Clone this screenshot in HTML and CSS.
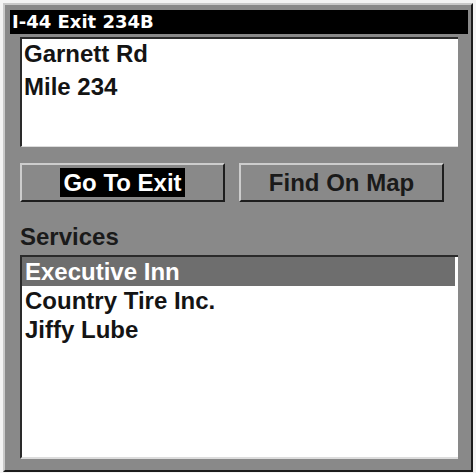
FILE: index.html
```html
<!DOCTYPE html>
<html lang="en">
<head>
    <meta charset="UTF-8">
    <meta name="viewport" content="width=device-width, initial-scale=1.0">
    <title>Exit Details</title>
    <link rel="stylesheet" href="styles.css">
</head>
<body>
    <div class="frame">
        <div class="title-bar">I-44 Exit 234B</div>

        <div class="panel">
            <!-- Exit info -->
            <div class="info-box">
                <div class="info-line">Garnett Rd</div>
                <div class="info-line">Mile 234</div>
            </div>

            <!-- Actions -->
            <div class="actions">
                <button class="btn"><span class="btn-label selected">Go To Exit</span></button>
                <button class="btn"><span class="btn-label">Find On Map</span></button>
            </div>

            <!-- Services list -->
            <div class="section-title">Services</div>
            <ul class="service-list">
                <li class="service selected">Executive Inn</li>
                <li class="service">Country Tire Inc.</li>
                <li class="service">Jiffy Lube</li>
            </ul>
        </div>
    </div>
</body>
</html>
```

FILE: styles.css
```css
body {
    margin: 0;
    padding: 0;
    background-color: #f4f4f4;
    font-family: 'Liberation Sans', Arial, sans-serif;
    font-weight: bold;
}

.frame {
    box-sizing: border-box;
    width: 470px;
    height: 469px;
    margin: 3px 3px 0 3px;
    padding: 5px 3px 0 5px;
    background-color: #898989;
    border-top: 2px solid #c9c9c9;
    border-left: 2px solid #c9c9c9;
    border-right: 2px solid #1c1c1c;
    border-bottom: 2px solid #1c1c1c;
}

.title-bar {
    height: 24px;
    line-height: 24px;
    padding-left: 2px;
    background-color: #000;
    color: #fff;
    font-family: 'DejaVu Sans', sans-serif;
    font-size: 18px;
}

.panel {
    padding: 0 10px;
}

.info-box {
    box-sizing: border-box;
    height: 110px;
    margin-top: 3px;
    padding-left: 2px;
    display: flex;
    flex-direction: column;
    gap: 4px;
    background-color: #fff;
    border-top: 2px solid #2a2a2a;
    border-left: 2px solid #2a2a2a;
    border-bottom: 1px solid #dcdcdc;
}

.info-line {
    font-size: 24px;
    line-height: 29px;
    color: #141414;
}

.actions {
    display: grid;
    grid-template-columns: 205px 205px;
    gap: 14px;
    margin-top: 16px;
}

.btn {
    box-sizing: border-box;
    height: 39px;
    padding: 0;
    background-color: #898989;
    border-top: 2px solid #cdcdcd;
    border-left: 2px solid #cdcdcd;
    border-right: 2px solid #1e1e1e;
    border-bottom: 2px solid #1e1e1e;
    font-family: inherit;
    font-weight: bold;
    font-size: 24px;
    color: #1a1a1a;
    display: flex;
    align-items: center;
    justify-content: center;
}

.btn-label {
    display: inline-block;
    line-height: 29px;
    padding: 0 3px;
}

.btn-label.selected {
    background-color: #000;
    color: #fff;
}

.section-title {
    margin-top: 20px;
    font-size: 24px;
    line-height: 29px;
    color: #1a1a1a;
}

.service-list {
    box-sizing: border-box;
    height: 204px;
    margin: 4px 0 0 0;
    padding: 0;
    list-style: none;
    background-color: #fff;
    border-top: 2px solid #2a2a2a;
    border-left: 2px solid #2a2a2a;
    border-bottom: 2px solid #dcdcdc;
}

.service {
    margin-right: 3px;
    padding-left: 3px;
    font-size: 24px;
    line-height: 29px;
    color: #141414;
}

.service.selected {
    background-color: #6e6e6e;
    color: #fff;
}
```
